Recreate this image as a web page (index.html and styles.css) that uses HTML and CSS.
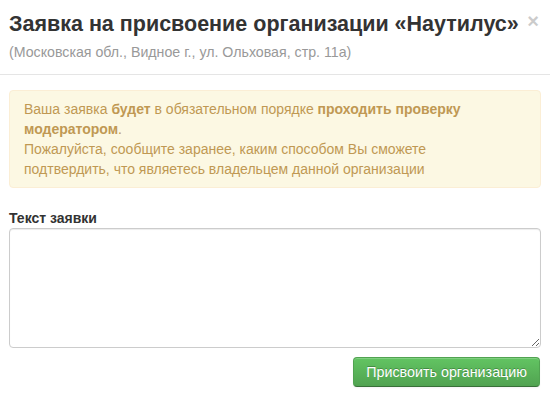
FILE: index.html
```html
<!DOCTYPE html>
<html lang="ru">
<head>
<meta charset="utf-8">
<link rel="stylesheet" href="styles.css">
</head>
<body>
<div class="modal">
  <div class="modal-header">
    <button class="close" type="button">×</button>
    <h3 class="title">Заявка на присвоение организации «Наутилус»</h3>
    <div class="address">(Московская обл., Видное г., ул. Ольховая, стр. 11a)</div>
  </div>
  <div class="modal-body">
    <div class="alert">
      Ваша заявка <b>будет</b> в обязательном порядке <b>проходить проверку модератором</b>.<br>
      Пожалуйста, сообщите заранее, каким способом Вы сможете подтвердить, что являетесь владельцем данной организации
    </div>
    <label class="label" for="req">Текст заявки</label>
    <textarea id="req" class="textarea"></textarea>
    <div class="actions">
      <button class="btn-success" type="button">Присвоить организацию</button>
    </div>
  </div>
</div>
</body>
</html>
```
FILE: styles.css
```css
html, body {
  margin: 0;
  padding: 0;
  background: #fff;
}
body {
  font-family: "Liberation Sans", Arial, sans-serif;
  font-size: 14px;
  line-height: 20px;
  color: #333;
}
.modal {
  width: 550px;
}
.modal-header {
  padding: 9px 9px 12px 9px;
  border-bottom: 1px solid #e5e5e5;
}
.close {
  float: right;
  margin-top: 2px;
  margin-right: 2px;
  padding: 0;
  border: 0;
  background: none;
  font-family: "Liberation Sans", Arial, sans-serif;
  font-size: 20px;
  font-weight: bold;
  line-height: 20px;
  color: #000;
  opacity: 0.2;
}
.title {
  margin: 0;
  font-size: 21.5px;
  line-height: 30px;
  font-weight: bold;
  color: #333;
}
.address {
  margin-top: 3px;
  color: #999;
  font-size: 14.2px;
  line-height: 20px;
}
.modal-body {
  padding: 15px 9px 9px 9px;
}
.alert {
  padding: 8px 35px 8px 14px;
  background: #fcf8e3;
  border: 1px solid #fbeed5;
  border-radius: 4px;
  color: #c09853;
  line-height: 20px;
}
.label {
  display: block;
  margin-top: 21px;
  line-height: 19px;
  font-weight: bold;
  color: #333;
}
.textarea {
  display: block;
  box-sizing: border-box;
  width: 532px;
  height: 120px;
  margin: 0;
  padding: 4px 6px;
  border: 1px solid #ccc;
  border-radius: 4px;
  box-shadow: inset 0 1px 1px rgba(0,0,0,0.075);
  font-family: inherit;
  font-size: 14px;
}
.actions {
  display: flex;
  justify-content: flex-end;
  margin-top: 9px;
  padding-right: 1px;
}
.btn-success {
  height: 30px;
  padding: 4px 12px;
  font-family: "Liberation Sans", Arial, sans-serif;
  font-size: 14.3px;
  line-height: 20px;
  color: #fff;
  text-shadow: 0 -1px 0 rgba(0,0,0,0.25);
  background: linear-gradient(to bottom, #62c462, #51a351);
  border: 1px solid #51a351;
  border-bottom-color: #387038;
  border-radius: 4px;
  box-shadow: inset 0 1px 0 rgba(255,255,255,0.2), 0 1px 2px rgba(0,0,0,0.05);
}
```
